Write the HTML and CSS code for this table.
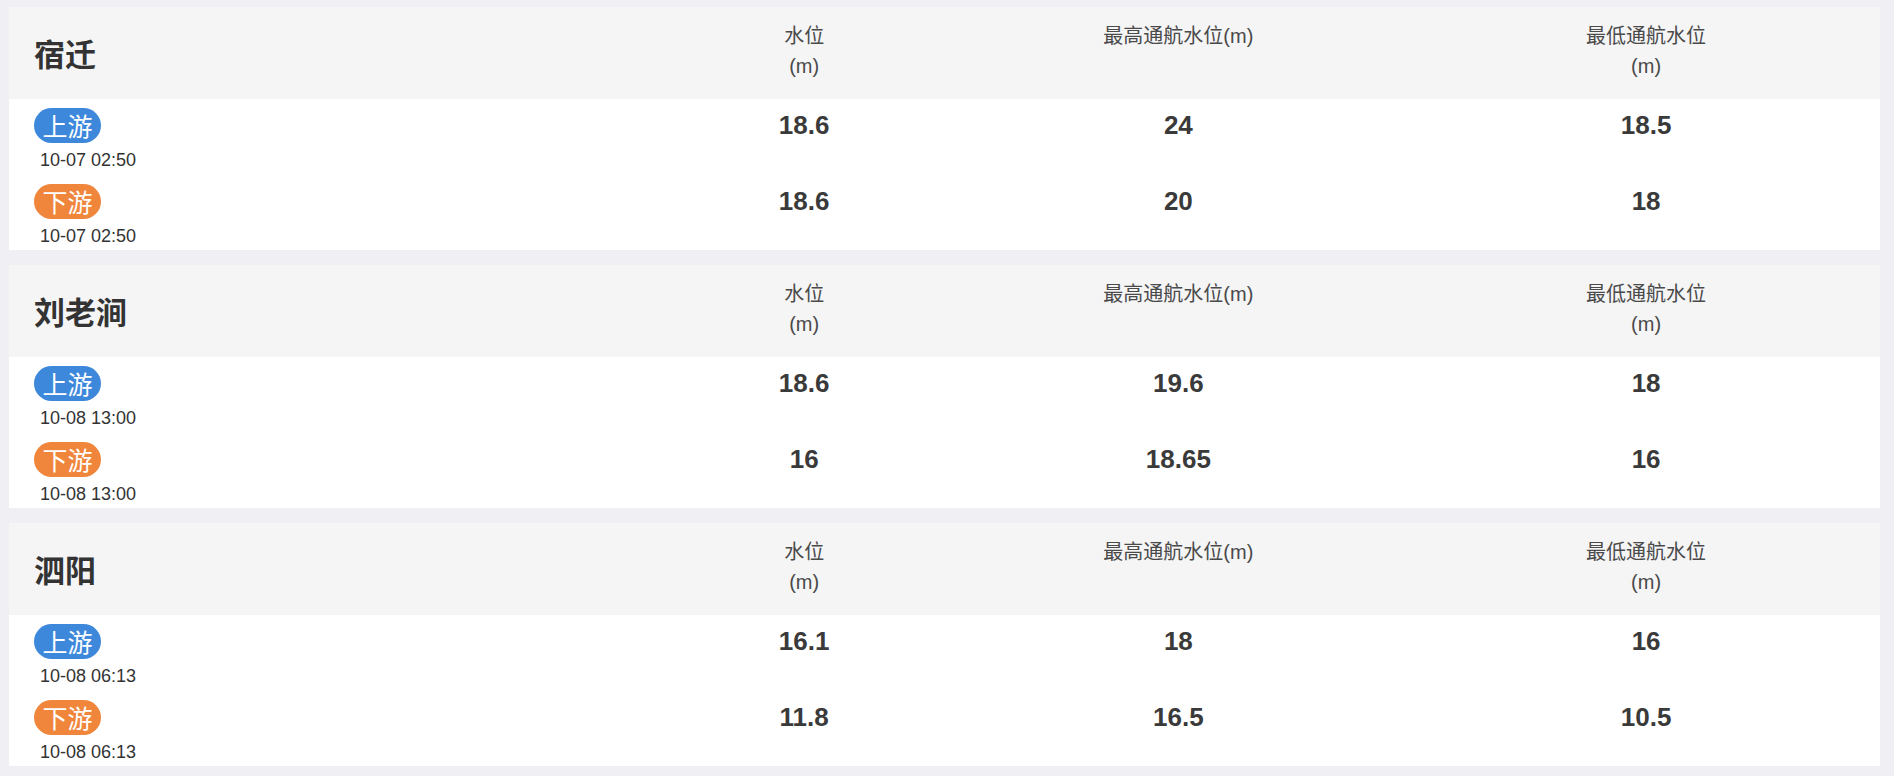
FILE: index.html
```html
<!DOCTYPE html>
<html lang="zh-CN">
<head>
<meta charset="utf-8">
<title>水位</title>
<link rel="stylesheet" href="styles.css">
</head>
<body>
<div class="page">
  <section class="card">
    <div class="card-head">
      <div class="station">宿迁</div>
      <div class="col-title">水位<br>(m)</div>
      <div class="col-title">最高通航水位(m)</div>
      <div class="col-title">最低通航水位<br>(m)</div>
    </div>
    <div class="card-body">
      <div class="row">
        <div class="meta"><span class="badge up">上游</span><span class="time">10-07 02:50</span></div>
        <div class="val">18.6</div><div class="val">24</div><div class="val">18.5</div>
      </div>
      <div class="row">
        <div class="meta"><span class="badge down">下游</span><span class="time">10-07 02:50</span></div>
        <div class="val">18.6</div><div class="val">20</div><div class="val">18</div>
      </div>
    </div>
  </section>

  <section class="card">
    <div class="card-head">
      <div class="station">刘老涧</div>
      <div class="col-title">水位<br>(m)</div>
      <div class="col-title">最高通航水位(m)</div>
      <div class="col-title">最低通航水位<br>(m)</div>
    </div>
    <div class="card-body">
      <div class="row">
        <div class="meta"><span class="badge up">上游</span><span class="time">10-08 13:00</span></div>
        <div class="val">18.6</div><div class="val">19.6</div><div class="val">18</div>
      </div>
      <div class="row">
        <div class="meta"><span class="badge down">下游</span><span class="time">10-08 13:00</span></div>
        <div class="val">16</div><div class="val">18.65</div><div class="val">16</div>
      </div>
    </div>
  </section>

  <section class="card">
    <div class="card-head">
      <div class="station">泗阳</div>
      <div class="col-title">水位<br>(m)</div>
      <div class="col-title">最高通航水位(m)</div>
      <div class="col-title">最低通航水位<br>(m)</div>
    </div>
    <div class="card-body">
      <div class="row">
        <div class="meta"><span class="badge up">上游</span><span class="time">10-08 06:13</span></div>
        <div class="val">16.1</div><div class="val">18</div><div class="val">16</div>
      </div>
      <div class="row">
        <div class="meta"><span class="badge down">下游</span><span class="time">10-08 06:13</span></div>
        <div class="val">11.8</div><div class="val">16.5</div><div class="val">10.5</div>
      </div>
    </div>
  </section>
</div>
</body>
</html>
```

FILE: styles.css
```css
* { box-sizing: border-box; }

html, body {
  margin: 0;
  padding: 0;
  background: #efeff4;
}

body {
  font-family: "Liberation Sans", "Noto Sans CJK SC", sans-serif;
  color: #333;
}

.page {
  padding: 7px 14px 0 9px;
  display: flex;
  flex-direction: column;
  gap: 15px;
}

.card {
  background: #fff;
  height: 243px;
}

.card-head,
.row {
  display: grid;
  grid-template-columns: 35% 15% 25% 25%;
}

.card-head {
  background: #f5f5f6;
  height: 92px;
  padding-top: 14px;
  align-items: start;
}

.station {
  align-self: center;
  margin-top: -14px;
  padding-left: 25px;
  font-family: "Noto Sans CJK SC", "Liberation Sans", sans-serif;
  font-size: 31px;
  font-weight: 700;
  line-height: 40px;
  color: #333;
}

.col-title {
  text-align: center;
  font-size: 20px;
  line-height: 30px;
  color: #4a4a4a;
  font-family: "Liberation Sans", "Noto Sans CJK SC", sans-serif;
}

.card-body {
  padding-top: 9px;
  display: flex;
  flex-direction: column;
  gap: 10px;
}

.row {
  align-items: start;
}

.meta {
  padding-left: 25px;
  display: flex;
  flex-direction: column;
  align-items: flex-start;
}

.badge {
  display: block;
  width: 67px;
  height: 35px;
  border-radius: 18px;
  color: #fff;
  text-align: center;
  font-family: "Noto Sans CJK SC", sans-serif;
  font-size: 25px;
  line-height: 35px;
}

.badge.up { background: #3e88dc; }
.badge.down { background: #f0853c; }

.time {
  display: block;
  margin-top: 3px;
  padding-left: 6px;
  padding-top: 1px;
  font-size: 18px;
  line-height: 27px;
  color: #333;
}

.val {
  text-align: center;
  font-size: 26px;
  font-weight: 700;
  line-height: 35px;
  color: #3a3a3a;
}
```
